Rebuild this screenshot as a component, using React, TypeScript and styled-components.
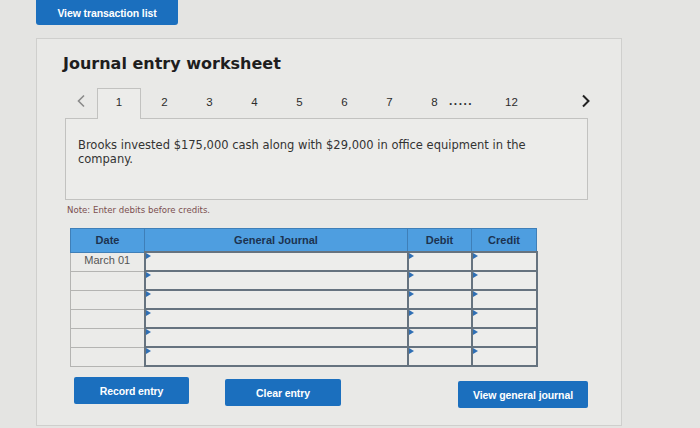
import React from 'react';
import styled, { createGlobalStyle } from 'styled-components';

const GlobalStyle = createGlobalStyle`
  html, body {
    margin: 0;
    padding: 0;
    background: #e4e4e2;
  }
  body {
    font-family: "DejaVu Sans", Verdana, sans-serif;
    color: #333;
  }
`;

const Page = styled.div`
  width: 700px;
  height: 428px;
  overflow: hidden;
  padding-left: 36px;
  box-sizing: border-box;
`;

const BlueButton = styled.button<{ $width: number; $shift?: number }>`
  width: ${(p) => p.$width}px;
  height: 27px;
  margin-top: ${(p) => p.$shift ?? 0}px;
  border: none;
  border-radius: 2px;
  background: #1b6fbe;
  color: #fff;
  font-family: "Liberation Sans", Arial, sans-serif;
  font-weight: bold;
  font-size: 10.5px;
  letter-spacing: -0.1px;
  padding: 0;
  cursor: pointer;
`;

const TopButton = styled(BlueButton)`
  display: block;
  height: 25px;
  border-radius: 0 0 3px 3px;
`;

const Panel = styled.div`
  margin-top: 13px;
  width: 586px;
  height: 388px;
  box-sizing: border-box;
  background: #e9e9e7;
  border: 1px solid #cfcfcd;
  padding: 14px 0 0 28px;
`;

const Title = styled.h2`
  margin: 0 0 0 -2px;
  font-size: 16px;
  font-weight: bold;
  color: #1e1e1e;
  line-height: 22px;
`;

const TabRow = styled.div`
  display: flex;
  align-items: stretch;
  height: 31px;
  margin-top: 12px;
  width: 537px;
`;

const Arrow = styled.span<{ $dark?: boolean }>`
  width: 32px;
  display: flex;
  align-items: center;
  justify-content: center;
  color: ${(p) => (p.$dark ? '#222' : '#8a8a8a')};
  padding-bottom: 4px;
  svg {
    display: block;
  }
`;

const Tab = styled.span<{ $active?: boolean }>`
  box-sizing: border-box;
  display: flex;
  align-items: center;
  justify-content: center;
  padding-bottom: 4px;
  font-family: "Liberation Sans", Arial, sans-serif;
  font-size: 11.5px;
  color: #2c2c2c;
  border: 1px solid ${(p) => (p.$active ? '#c2c2c0' : 'transparent')};
  border-bottom: none;
  background: ${(p) => (p.$active ? '#ececea' : 'transparent')};
  position: relative;
  top: 1px;
  width: ${(p) => (p.$active ? 44 : 45)}px;
  margin-right: ${(p) => (p.$active ? 1 : 0)}px;
`;

const Dots = styled.span`
  display: flex;
  align-items: center;
  margin-left: -8px;
  width: 40px;
  padding-bottom: 4px;
  font-family: "Liberation Sans", Arial, sans-serif;
  font-size: 12px;
  font-weight: bold;
  letter-spacing: 1.5px;
  color: #333;
`;

const Spacer = styled.span`
  flex: 1;
`;

const Description = styled.div`
  width: 523px;
  height: 82px;
  box-sizing: border-box;
  border: 1px solid #c2c2c0;
  background: #ececea;
  padding: 19px 50px 0 12px;
  font-size: 11.5px;
  line-height: 14px;
  color: #333;
`;

const Note = styled.div`
  margin: 4px 0 0 2px;
  font-size: 8.6px;
  line-height: 12px;
  color: #7b4f4f;
`;

const Table = styled.table`
  margin: 12px 0 0 5px;
  border-collapse: collapse;
  width: 462px;
  table-layout: fixed;
`;

const HeadCell = styled.th<{ $width: number }>`
  width: ${(p) => p.$width}px;
  height: 22px;
  padding: 0;
  background: #4e9ee0;
  border: 1px solid #3f7fb8;
  font-family: "Liberation Sans", Arial, sans-serif;
  font-size: 11px;
  font-weight: bold;
  color: #1c3350;
  text-align: center;
`;

const DateCell = styled.td`
  height: 17px;
  padding: 1px 0 0;
  vertical-align: top;
  background: #ebebe9;
  border: 1px solid #b4b4b2;
  font-family: "Liberation Sans", Arial, sans-serif;
  font-size: 11px;
  line-height: 13px;
  color: #555;
  text-align: center;
`;

const InputCell = styled.td`
  height: 17px;
  padding: 0;
  background: #ededeb;
  border: 2px solid #66737f;
  position: relative;
  &::before {
    content: '';
    position: absolute;
    left: 0;
    top: 0;
    border-top: 3px solid transparent;
    border-bottom: 3px solid transparent;
    border-left: 5px solid #2f6fb4;
  }
`;

const ButtonRow = styled.div`
  display: flex;
  width: 523px;
  margin-top: 10px;
  padding-left: 9px;
  box-sizing: border-box;
  gap: 36px;
  align-items: flex-start;
`;

const RightButton = styled(BlueButton)`
  margin-left: auto;
`;

const ChevronLeft = () => (
  <svg width="10" height="14" viewBox="0 0 10 14">
    <path d="M8 1.5 L2.5 7 L8 12.5" fill="none" stroke="currentColor" strokeWidth="1.6" />
  </svg>
);

const ChevronRight = () => (
  <svg width="10" height="14" viewBox="0 0 10 14">
    <path d="M2 1.5 L7.5 7 L2 12.5" fill="none" stroke="currentColor" strokeWidth="2" />
  </svg>
);

const rows = ['March 01', '', '', '', '', ''];

const App: React.FC = () => {
  return (
    <Page>
      <GlobalStyle />
      <TopButton $width={142}>View transaction list</TopButton>
      <Panel>
        <Title>Journal entry worksheet</Title>
        <TabRow>
          <Arrow>
            <ChevronLeft />
          </Arrow>
          <Tab $active>1</Tab>
          {[2, 3, 4, 5, 6, 7, 8].map((n) => (
            <Tab key={n}>{n}</Tab>
          ))}
          <Dots>.....</Dots>
          <Tab>12</Tab>
          <Spacer />
          <Arrow $dark>
            <ChevronRight />
          </Arrow>
        </TabRow>
        <Description>
          Brooks invested $175,000 cash along with $29,000 in office equipment in the company.
        </Description>
        <Note>Note: Enter debits before credits.</Note>
        <Table>
          <thead>
            <tr>
              <HeadCell $width={73}>Date</HeadCell>
              <HeadCell $width={262}>General Journal</HeadCell>
              <HeadCell $width={63}>Debit</HeadCell>
              <HeadCell $width={64}>Credit</HeadCell>
            </tr>
          </thead>
          <tbody>
            {rows.map((d, i) => (
              <tr key={i}>
                <DateCell>{d}</DateCell>
                <InputCell />
                <InputCell />
                <InputCell />
              </tr>
            ))}
          </tbody>
        </Table>
        <ButtonRow>
          <BlueButton $width={115}>Record entry</BlueButton>
          <BlueButton $width={116} $shift={2}>
            Clear entry
          </BlueButton>
          <RightButton $width={130} $shift={4}>
            View general journal
          </RightButton>
        </ButtonRow>
      </Panel>
    </Page>
  );
};

export default App;
